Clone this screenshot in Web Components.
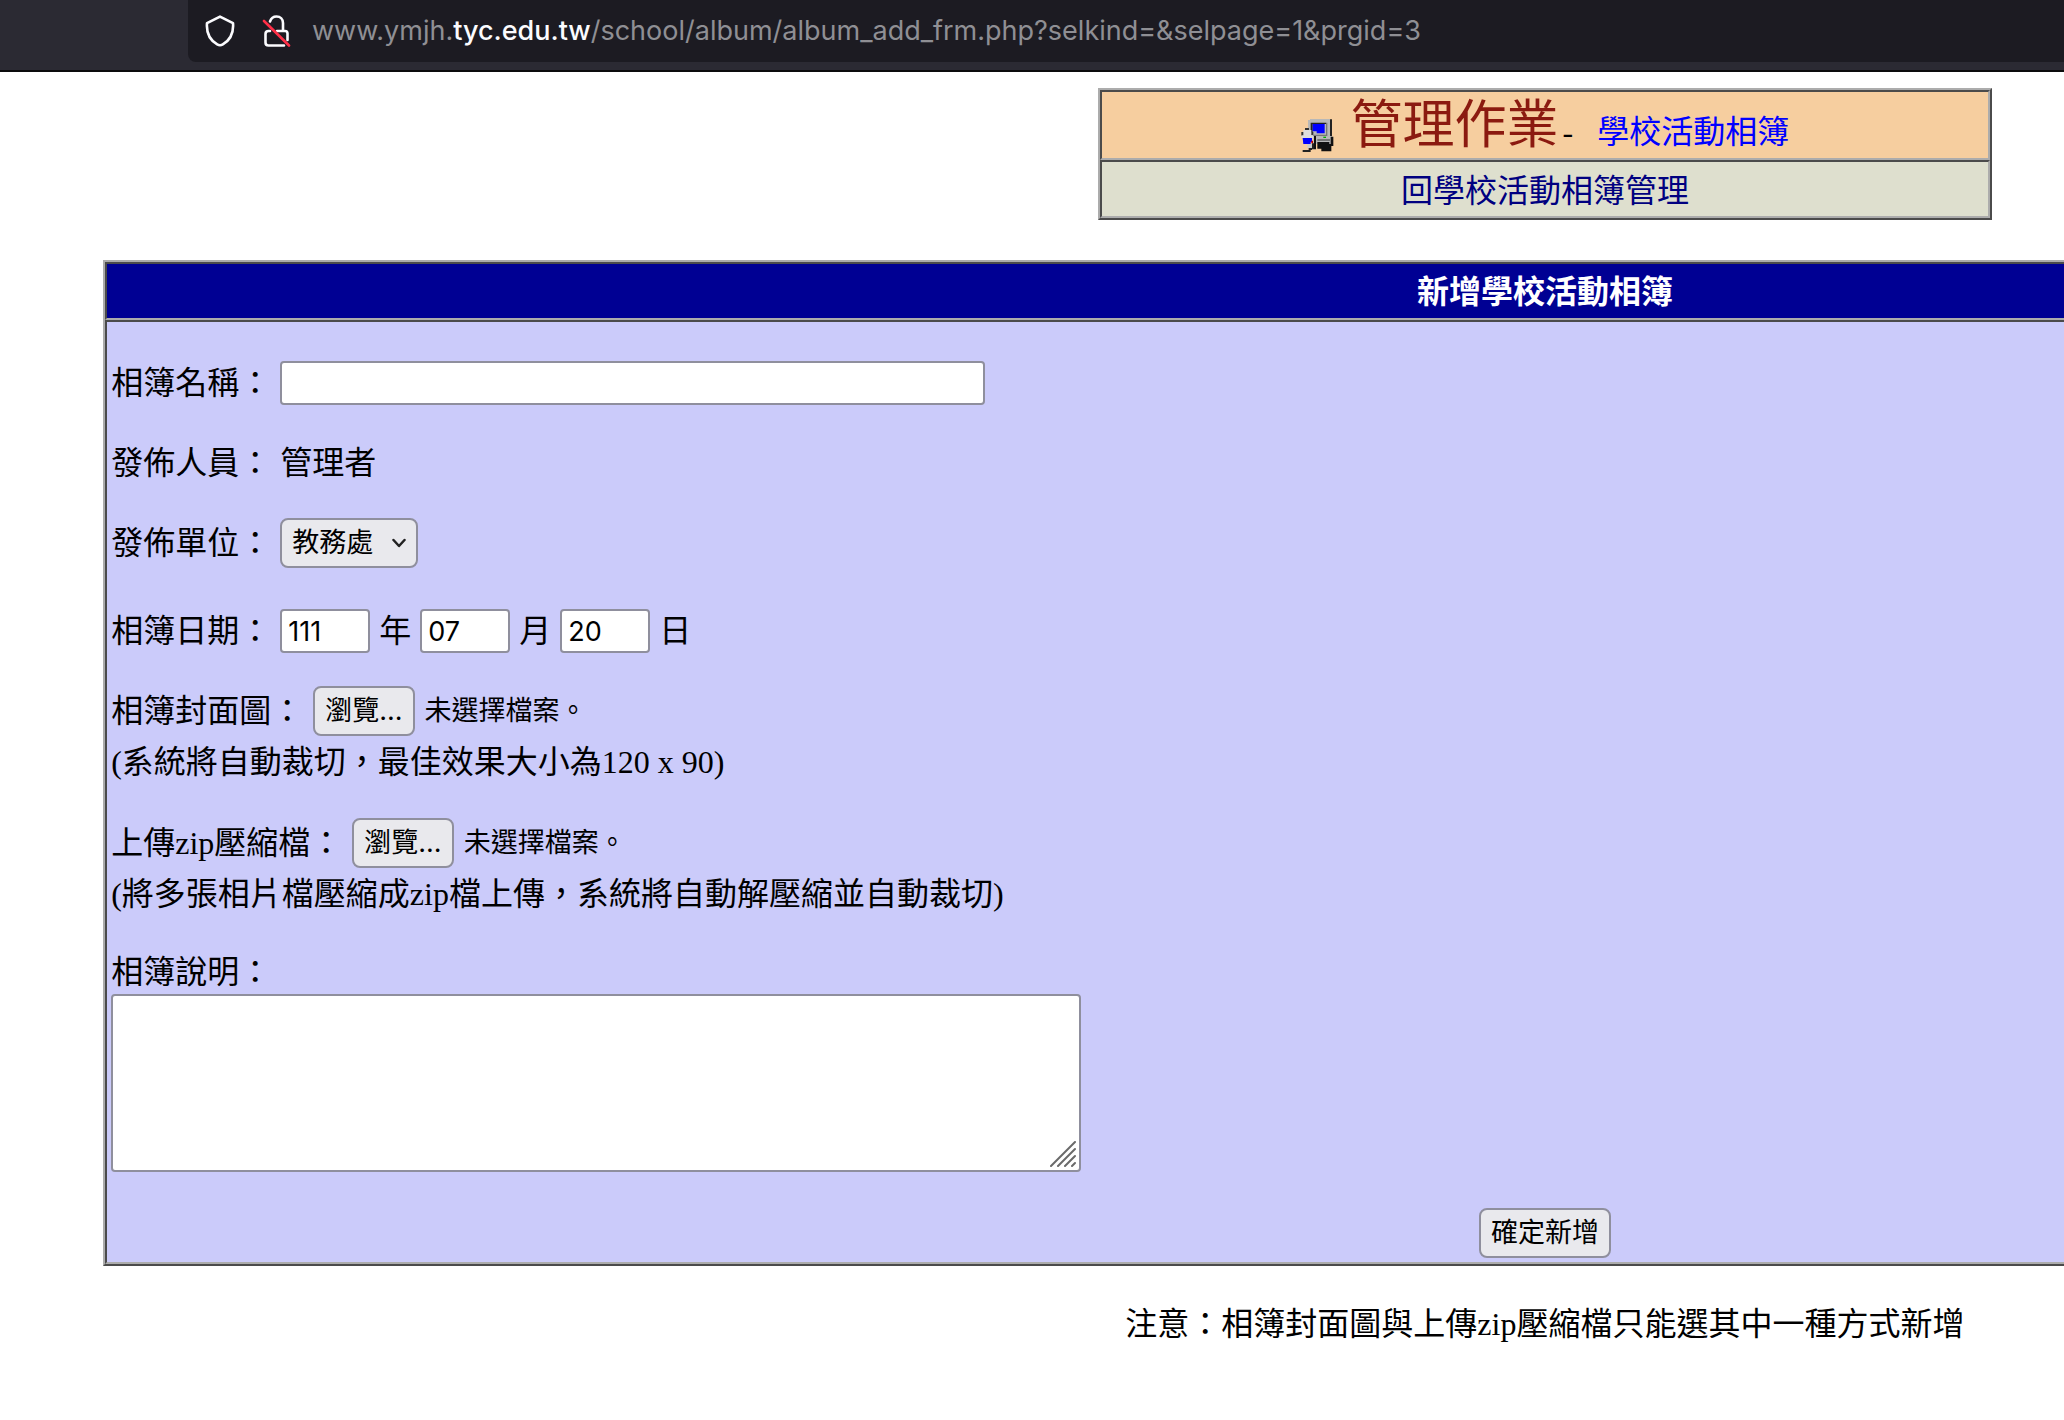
<!DOCTYPE html>
<html lang="zh-Hant">
<head>
<meta charset="utf-8">
<meta name="viewport" content="width=device-width, initial-scale=1">
<title>新增學校活動相簿</title>
<style>
    body {
        margin: 0;
        background: #fff;
        color: #000;
        font-family: "Liberation Serif", "Noto Sans CJK TC", serif;
        font-size: 32px;
        line-height: 44px;
        overflow-x: hidden;
        --ui-font: Inter, "Noto Sans CJK TC", sans-serif;
        --light-edge: #acacac;
        --dark-edge: #4b4b4b;
        --control-border: #8f8f9d;
        --control-bg: #e9e9ed;
    }
</style>
</head>
<body>
<address-bar></address-bar>
<album-page></album-page>

<script>
// Shared look of the native controls
const controlStyles = `
    input, textarea, select, button {
        box-sizing: border-box;
        margin: 0;
        border: 2px solid var(--control-border);
        border-radius: 4px;
        background: #fff;
        color: #000;
        font: 27px/32px var(--ui-font);
    }
    input {
        height: 44px;
        padding: 0 6px;
    }
    button, select {
        height: 50px;
        padding: 0 10px;
        border-radius: 8px;
        background: var(--control-bg);
        white-space: nowrap;
    }
`;

class AddressBar extends HTMLElement {
    connectedCallback() {
        this.attachShadow({ mode: 'open' });
        this.shadowRoot.innerHTML = `
            <style>
                :host {
                    display: block;
                    padding: 0 0 8px 188px;
                    background: #2b2a33;
                    border-bottom: 2px solid #0c0c0d;
                }
                .field {
                    display: flex;
                    align-items: center;
                    gap: 20px;
                    height: 62px;
                    padding-left: 16px;
                    background: #1c1b22;
                    border-radius: 0 0 0 8px;
                    overflow: hidden;
                }
                .icons {
                    display: flex;
                    flex: none;
                    gap: 24px;
                }
                svg {
                    width: 32px;
                    height: 32px;
                }
                .url {
                    font: 27px/36px var(--ui-font);
                    color: #8f8f94;
                    white-space: nowrap;
                }
                .url b {
                    font-weight: 500;
                    color: #fbfbfe;
                }
            </style>
            <div class="field">
                <div class="icons">
                    <svg viewBox="0 0 32 32" fill="none" stroke="#fbfbfe" stroke-width="2.6" stroke-linejoin="round">
                        <path d="M16 1.6 29 8.2c.7 8.6-2.2 16.5-10.2 21.2Q16 31 13.2 29.4C5.2 24.7 2.3 16.8 3 8.2Z"/>
                    </svg>
                    <svg viewBox="0 0 32 32" fill="none" stroke-width="2.6" stroke-linecap="round">
                        <path stroke="#fbfbfe" d="M10 6.5C11.2 3 13.500 1.5 16.5 1.5c4 0 6.500 2.800 6.500 6.500v8M10 16H8.500Q5.500 16 5.500 19v8.500q0 3 3 3H24M17 16h8q2.500 0 2.500 2.500V25"/>
                        <path stroke="#ff2f47" d="M4 6 29 30.5"/>
                    </svg>
                </div>
                <div class="url">www.ymjh.<b>tyc.edu.tw</b>/school/album/album_add_frm.php?selkind=&amp;selpage=1&amp;prgid=3</div>
            </div>
        `;
    }
}

// Raised frame round a stack of sunken cells
class BevelFrame extends HTMLElement {
    connectedCallback() {
        this.attachShadow({ mode: 'open' });
        this.shadowRoot.innerHTML = `
            <style>
                :host {
                    display: block;
                    box-sizing: border-box;
                    border: 2px solid;
                    border-color: var(--light-edge) var(--dark-edge) var(--dark-edge) var(--light-edge);
                }
                ::slotted(*) {
                    display: block;
                    margin: 0;
                    border: 2px solid;
                    border-color: var(--dark-edge) var(--light-edge) var(--light-edge) var(--dark-edge);
                }
            </style>
            <slot></slot>
        `;
    }
}

class AdminBanner extends HTMLElement {
    connectedCallback() {
        this.attachShadow({ mode: 'open' });
        this.shadowRoot.innerHTML = `
            <style>
                :host {
                    display: block;
                }
                a {
                    color: #00f;
                    text-decoration: none;
                }
                .line {
                    display: flex;
                    align-items: baseline;
                    justify-content: center;
                    height: 66px;
                }
                .top {
                    background: #f6ce9f;
                }
                .bottom {
                    text-align: center;
                    padding: 7px 0 3px;
                    background: #dedfce;
                }
                .bottom a {
                    color: #000080;
                }
                svg {
                    align-self: flex-end;
                    width: 33px;
                    height: 33px;
                    margin: 0 17px 6px 0;
                }
                .title {
                    font-size: 52px;
                    line-height: 68px;
                    color: #8b1a10;
                }
                .dash {
                    margin: 0 24px 0 4px;
                }
            </style>
            <bevel-frame>
                <div class="top">
                    <div class="line">
                        <svg viewBox="33 27 99 99">
                            <path fill="#b8b8b8" d="M54 30h6v-3h60v6h6v50h-60v-12h-12z"/>
                            <path fill="#222" d="M120 28h6v50h-6zM62 38h46v4h-40v34h-6z"/>
                            <path fill="#777" d="M108 38h4v40h-44v-4h40z"/>
                            <path fill="#00f" d="M68 42h36v28h-24v-6h-12z"/>
                            <path fill="#b8b8b8" d="M70 82h54v20h-54z"/>
                            <path fill="#111" d="M122 80h8v28h-8zM72 78h6v40h-6zM82 96h36v6h6v22h-30v-8h-12z"/>
                            <path fill="#555" d="M82 88h38v4h-38z"/>
                            <path fill="#0a0" d="M100 80h8v4h-8z"/>
                            <path fill="#333" d="M45 54h12v8h-12zM34 66h10v12h-10zM60 66h10v8h-10z"/>
                            <path fill="#ddd" d="M40 60h24v16h6v8h-36v-8h6z"/>
                            <path fill="#00f" d="M38 84h28v12h-4v6h-22z"/>
                            <path fill="#b00" d="M64 92h5v8h-5z"/>
                            <path fill="#ccc" d="M52 102h16v12h-16z"/>
                            <path fill="#222" d="M66 100h6v18h-6zM56 114h10v6h-4v6h-24v-6h18z"/>
                        </svg>
                        <span class="title">管理作業</span>
                        <span class="dash">-</span>
                        <a href="#album">學校活動相簿</a>
                    </div>
                </div>
                <div class="bottom"><a href="#manage">回學校活動相簿管理</a></div>
            </bevel-frame>
        `;
    }
}

class FormRow extends HTMLElement {
    connectedCallback() {
        this.attachShadow({ mode: 'open' });
        this.shadowRoot.innerHTML = `
            <style>
                :host {
                    display: flex;
                    align-items: center;
                    gap: 9px;
                    min-height: 50px;
                    margin-bottom: 30px;
                }
            </style>
            <slot></slot>
        `;
    }
}

class FilePicker extends HTMLElement {
    connectedCallback() {
        this.attachShadow({ mode: 'open' });
        this.shadowRoot.innerHTML = `
            <style>
                ${controlStyles}
                :host {
                    display: block;
                    margin-bottom: 30px;
                }
                .pick {
                    display: flex;
                    align-items: center;
                    gap: 10px;
                    min-height: 50px;
                }
                input {
                    display: none;
                }
                .status {
                    font: 27px/32px var(--ui-font);
                }
                .hint {
                    line-height: 52px;
                }
            </style>
            <div class="pick">
                <label for="browse">${this.getAttribute('label')}</label>
                <button id="browse" type="button">瀏覽...</button>
                <input type="file" aria-label="${this.getAttribute('label')}">
                <span class="status">未選擇檔案。</span>
            </div>
            <div class="hint"><slot></slot></div>
        `;

        const input = this.shadowRoot.querySelector('input');
        const status = this.shadowRoot.querySelector('.status');
        this.shadowRoot.querySelector('button').addEventListener('click', () => input.click());
        input.addEventListener('change', () => {
            status.textContent = input.files.length ? input.files[0].name : '未選擇檔案。';
        });
    }
}

class AlbumForm extends HTMLElement {
    connectedCallback() {
        this.attachShadow({ mode: 'open' });
        this.shadowRoot.innerHTML = `
            <style>
                ${controlStyles}
                :host {
                    display: block;
                }
                h1 {
                    padding: 6px 0 4px;
                    background: #000093;
                    color: #fff;
                    font-size: 32px;
                    text-align: center;
                }
                form {
                    padding: 36px 4px 4px;
                    background: #cbcbfa;
                }
                .name {
                    width: 705px;
                }
                .date {
                    width: 90px;
                }
                .unit {
                    margin-bottom: 38px;
                }
                .select {
                    display: grid;
                    align-items: center;
                    justify-items: end;
                }
                .select > * {
                    grid-area: 1 / 1;
                }
                select {
                    appearance: none;
                    padding-right: 43px;
                }
                .select svg {
                    width: 14px;
                    height: 10px;
                    margin-right: 12px;
                    pointer-events: none;
                }
                .about {
                    display: block;
                }
                .note {
                    display: grid;
                    width: 970px;
                    margin-bottom: 36px;
                }
                .note > * {
                    grid-area: 1 / 1;
                }
                textarea {
                    height: 178px;
                    padding: 4px;
                    resize: none;
                }
                .grip {
                    width: 26px;
                    height: 26px;
                    place-self: end;
                    margin: 0 5px 5px 0;
                    pointer-events: none;
                }
                .submit {
                    text-align: center;
                    line-height: 0;
                }
            </style>
            <bevel-frame>
                <h1>新增學校活動相簿</h1>
                <form>
                    <form-row>
                        <label for="name">相簿名稱：</label>
                        <input id="name" class="name" type="text">
                    </form-row>
                    <form-row>
                        <span>發佈人員：</span>
                        <span>管理者</span>
                    </form-row>
                    <form-row class="unit">
                        <label for="unit">發佈單位：</label>
                        <div class="select">
                            <select id="unit"><option>教務處</option></select>
                            <svg viewBox="0 0 14 10" fill="none" stroke="#222" stroke-width="2.5" stroke-linecap="round" stroke-linejoin="round"><path d="m1.5 2 5.500 6 5.500-6"/></svg>
                        </div>
                    </form-row>
                    <form-row role="group" aria-label="相簿日期">
                        <span>相簿日期：</span>
                        <input id="year" class="date" type="text" value="111">
                        <label for="year">年</label>
                        <input id="month" class="date" type="text" value="07">
                        <label for="month">月</label>
                        <input id="day" class="date" type="text" value="20">
                        <label for="day">日</label>
                    </form-row>
                    <file-picker label="相簿封面圖：">(系統將自動裁切，最佳效果大小為120 x 90)</file-picker>
                    <file-picker label="上傳zip壓縮檔：">(將多張相片檔壓縮成zip檔上傳，系統將自動解壓縮並自動裁切)</file-picker>
                    <label class="about" for="about">相簿說明：</label>
                    <div class="note">
                        <textarea id="about"></textarea>
                        <svg class="grip" viewBox="0 0 26 26" stroke="#6a6a6a" stroke-width="2" stroke-linecap="round"><path d="M1 25 25 1M8 25 25 8M15 25l10-10M22 25l3-3"/></svg>
                    </div>
                    <div class="submit"><button type="submit">確定新增</button></div>
                </form>
            </bevel-frame>
        `;
    }
}

class AlbumPage extends HTMLElement {
    connectedCallback() {
        this.attachShadow({ mode: 'open' });
        // The sheet is half as wide again as the window and runs off its right edge
        this.shadowRoot.innerHTML = `
            <style>
                :host {
                    display: block;
                    box-sizing: border-box;
                    width: 149.7vw;
                    padding: 16px 5vw;
                }
                admin-banner {
                    width: 31%;
                    margin: 0 auto 40px;
                }
                p {
                    margin: 36px 0 0;
                    text-align: center;
                }
            </style>
            <admin-banner></admin-banner>
            <album-form></album-form>
            <p>注意：相簿封面圖與上傳zip壓縮檔只能選其中一種方式新增</p>
        `;
    }
}

customElements.define('address-bar', AddressBar);
customElements.define('bevel-frame', BevelFrame);
customElements.define('admin-banner', AdminBanner);
customElements.define('form-row', FormRow);
customElements.define('file-picker', FilePicker);
customElements.define('album-form', AlbumForm);
customElements.define('album-page', AlbumPage);
</script>
</body>
</html>
